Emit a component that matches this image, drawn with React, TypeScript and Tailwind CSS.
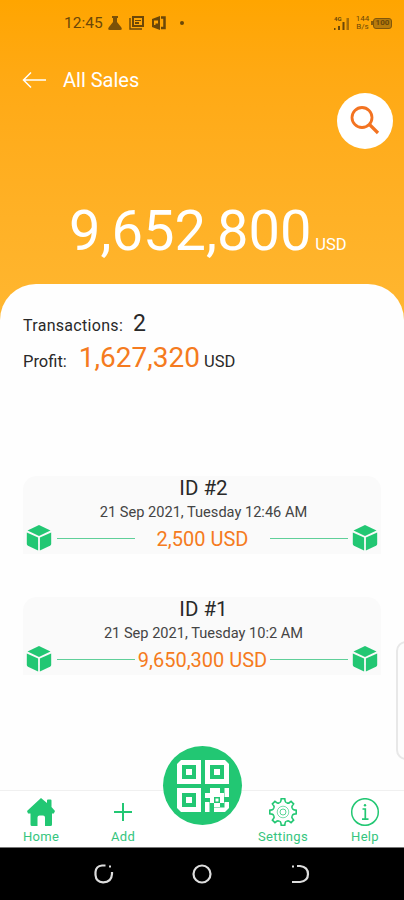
const sales = [
  { id: "ID #2", date: "21 Sep 2021, Tuesday 12:46 AM", amount: "2,500 USD" },
  { id: "ID #1", date: "21 Sep 2021, Tuesday 10:2 AM", amount: "9,650,300 USD" },
];

function Cube() {
  return (
    <svg width="26" height="28" viewBox="0 0 26 28" fill="#22c773" className="shrink-0">
      <path d="M13 1 24.5 6.6 13 12 1.5 6.6Z" />
      <path d="M.8 8.4 12.1 13.6V26.6L2 21.8Q.8 21.2.8 20Z" />
      <path d="M25.2 8.4 13.9 13.6V26.6L24 21.8Q25.2 21.2 25.2 20Z" />
    </svg>
  );
}

function HomeIcon() {
  return (
    <svg width="28" height="28" viewBox="0 0 28 28" fill="#22c773">
      <path d="M14 0 20 5V2.500Q20 1.500 21 1.500H23.500Q24.500 1.500 24.500 2.500V9L28 13 26.800 15.500H25V26.500Q25 28 23.500 28H18V19.500Q18 17.500 16 17.500H12.500Q10.500 17.500 10.500 19.500V28H5Q3.500 28 3.500 26.500V15.500H1L0 13Z" />
    </svg>
  );
}

function PlusIcon() {
  return (
    <svg width="28" height="28" viewBox="0 0 28 28" fill="none" stroke="#22c773" strokeWidth="2">
      <path d="M14 5V23M5 14H23" />
    </svg>
  );
}

function GearIcon() {
  return (
    <svg width="28" height="28" viewBox="0 0 28 28" fill="none" stroke="#22c773" strokeWidth="1.600">
      {[0, 45, 90, 135, 180, 225, 270, 315].map((angle) => (
        <path
          key={angle}
          transform={`rotate(${angle} 14 14)`}
          d="M10.200 4.700Q11.700 4.400 11.900 3L12.200.8H15.800L16.100 3Q16.300 4.400 17.800 4.700"
        />
      ))}
      <circle cx="14" cy="14" r="5.800" strokeWidth="1" opacity=".6" />
      <circle cx="14" cy="14" r="3" strokeWidth="1" opacity=".75" />
    </svg>
  );
}

function InfoIcon() {
  return (
    <svg width="30" height="28" viewBox="0 0 30 28" fill="none" stroke="#22c773" strokeWidth="1.500">
      <circle cx="15" cy="14" r="13.300" />
      <path d="M12.500 11H15.300V21M12 21.200H18.500" strokeWidth="1.700" />
      <circle cx="15" cy="7.300" r="1.200" fill="#22c773" stroke="none" />
    </svg>
  );
}

function QrIcon() {
  return (
    <svg width="52" height="52" viewBox="0 0 52 52" fill="white" fillRule="evenodd">
      <path d="M4 0H24V24H0V4ZM5 5V19H19V5ZM9 9H15V15H9Z" />
      <path d="M28 0H48L52 4V24H28ZM33 5V19H47V5ZM37 9H43V15H37Z" />
      <path d="M0 28H24V52H4L0 48ZM5 33V47H19V33ZM9 37H15V43H9Z" />
      {/* alignment corner */}
      <path d="M33 28H43V33H47V43H43V47H37V43H33V38H28V33H33ZM37 37V43H43V37Z" />
      <path d="M47.500 28H52V37H47.500ZM28 42H32.500V52H28ZM37 47.500H47.500V42H52V48L48 52H37ZM38.500 38.500H41.500V41.500H38.500Z" />
    </svg>
  );
}

function StatusBar() {
  return (
    <div className="flex h-[46px] shrink-0 items-center pl-16 text-[#6b4708]">
      <span className="mt-[2px] w-[44px] text-[15.500px] leading-none">12:45</span>
      <svg width="80" height="18" viewBox="0 0 80 18" fill="currentColor">
        <path d="M4 2H10V4H9V8L13 13Q15 16 12 16H2Q-1 16 1 13L5 8V4H4Z" opacity=".9" />
        <path d="M24 2H36V13H24ZM26 4V11H34V4ZM27 6H33V7H27ZM27 8H31V10H27Z" fillRule="evenodd" />
        <path d="M22 4V15H34" fill="none" stroke="currentColor" strokeWidth="1.400" />
        <path d="M44 5 52 2V16L44 13ZM46 6.500V11H47.500V9.500H50V6.500Z" fillRule="evenodd" />
        <path d="M53 3.500H56.500V14H53" fill="none" stroke="currentColor" strokeWidth="2.500" />
        <circle cx="74" cy="9" r="2" />
      </svg>
      <div className="ml-auto mr-3 flex items-center">
        <div className="mr-1 flex w-[16px] flex-col">
          <span className="h-[6px] text-[6px] font-bold leading-[6px]">4G</span>
          <svg width="16" height="12" viewBox="0 0 16 12" fill="currentColor" className="-mt-1">
            <path d="M0 10H1.500V12H0ZM4 8H6V12H4ZM8.500 4H10.500V12H8.500Z" />
            <path d="M12.500 0H15V12H12.500Z" opacity=".6" />
          </svg>
        </div>
        <div className="flex w-[17px] flex-col text-center text-[8px] leading-[8px]">
          <span>144</span>
          <span>B/s</span>
        </div>
        <span className="h-1 w-[2px] bg-[#8a5c08]" />
        <span className="flex h-[11px] w-[19px] items-center justify-center rounded-[3px] border border-[#80560b] bg-[#b87b0b] text-[8px] font-bold leading-none">
          100
        </span>
      </div>
    </div>
  );
}

function NavItem({ label, children }: { label: string; children: React.ReactNode }) {
  return (
    <div className="flex w-[82px] flex-col items-center pt-[7px] text-[13px] leading-[15px] tracking-[0.3px] text-[#35c57e]">
      {children}
      <span className="mt-[3px]">{label}</span>
    </div>
  );
}

export default function App() {
  return (
    <main className="relative flex h-[900px] w-[404px] flex-col overflow-hidden bg-gradient-to-b from-[#ffa500] to-[#ffb62f] to-[310px] font-[Roboto,sans-serif] text-[#292929]">
      <StatusBar />

      <header className="flex h-[47px] shrink-0 items-start pl-[22px] pt-[22px] text-white">
        <svg width="25" height="24" viewBox="0 0 25 24" fill="none" stroke="white" strokeWidth="1.500">
          <path d="M9 4.500 1.500 12 9 19.500M1.500 12H24" />
        </svg>
        <h1 className="ml-4 text-[20px] leading-6">All Sales</h1>
      </header>

      <button className="mr-[11px] flex h-[56px] w-[56px] shrink-0 items-center justify-center self-end rounded-full bg-white">
        <svg width="30" height="30" viewBox="0 0 30 30" fill="none" stroke="#f37321" strokeWidth="2.800">
          <circle cx="12" cy="11.500" r="10" />
          <path d="M19.500 18.500 28 27" strokeWidth="3.200" />
        </svg>
      </button>

      <div className="flex h-[135px] shrink-0 items-baseline pl-[69px] pt-[49px] text-white">
        <span className="text-[56px] leading-[66px]">9,652,800</span>
        <span className="ml-1 text-[16.500px]">USD</span>
      </div>

      <section className="min-h-0 grow rounded-t-[36px] bg-[#fefefe]">
        <div className="h-[192px] pl-[23px] pt-[25px]">
          <p className="flex h-[30px] items-baseline text-[16px] leading-[30px] tracking-[0.3px]">
            Transactions: <span className="ml-[10px] text-[23px]">2</span>
          </p>
          <p className="mt-[2px] flex h-[34px] items-baseline text-[16.500px] leading-[34px]">
            Profit: <span className="ml-3 mr-[4px] text-[28px] text-[#f57b20]">1,627,320</span> USD
          </p>
        </div>

        <div className="flex flex-col gap-[43px] px-[23px]">
          {sales.map((sale) => (
            <article key={sale.id} className="flex h-[78px] flex-col items-center rounded-t-[14px] bg-[#fafafa]">
              <h2 className="ml-[3px] text-[20.500px] leading-6">{sale.id}</h2>
              <p className="ml-[3px] mt-[4px] text-[14.600px] leading-[17px] text-[#444]">{sale.date}</p>
              <div className="mt-[3px] flex w-full items-center pl-[3px] pr-[4px]">
                <Cube />
                <span className="ml-[5px] h-px w-[78px] shrink-0 bg-[#5fcf99]" />
                <span className="w-[135px] shrink-0 whitespace-nowrap pt-[2px] text-center text-[20px] leading-[26px] text-[#f57b20]">
                  {sale.amount}
                </span>
                <span className="mr-[4px] h-px w-[78px] shrink-0 bg-[#5fcf99]" />
                <Cube />
              </div>
            </article>
          ))}
        </div>
      </section>

      {/* edge panel handle */}
      <div className="absolute -right-3 top-[641px] h-[119px] w-5 rounded-l-[10px] border-2 border-[#e8e8e8] bg-[#fdfdfd]" />

      <nav className="relative flex h-[57px] shrink-0 justify-between border-t border-[#f0f0f0] bg-white">
        <div className="flex">
          <NavItem label="Home"><HomeIcon /></NavItem>
          <NavItem label="Add"><PlusIcon /></NavItem>
        </div>
        <div className="-mr-[2px] flex">
          <NavItem label="Settings"><GearIcon /></NavItem>
          <NavItem label="Help"><InfoIcon /></NavItem>
        </div>
        <button className="absolute -top-[45px] left-[163px] flex h-[79px] w-[79px] items-center justify-center rounded-full bg-[#22c773]">
          <QrIcon />
        </button>
      </nav>

      <footer className="flex h-[53px] shrink-0 items-center justify-center gap-[78px] border-t border-[#777] bg-black">
        <svg width="20" height="20" viewBox="0 0 20 20" fill="none" stroke="#ddd" strokeWidth="2.200">
          <path d="M11.500 1.500H8Q2 2 1.500 8V11Q2 18 9 18.300Q17.500 18.500 18 10V8" />
          <path d="M15 2.500H17" />
        </svg>
        <svg width="20" height="20" viewBox="0 0 20 20" fill="none" stroke="#ddd" strokeWidth="2.200">
          <circle cx="10" cy="10" r="8.500" />
        </svg>
        <svg width="20" height="20" viewBox="0 0 20 20" fill="none" stroke="#ddd" strokeWidth="2.200">
          <path d="M7 2H10Q18 3 18 10T10 18H2M2 2.500H4" />
        </svg>
      </footer>
    </main>
  );
}
